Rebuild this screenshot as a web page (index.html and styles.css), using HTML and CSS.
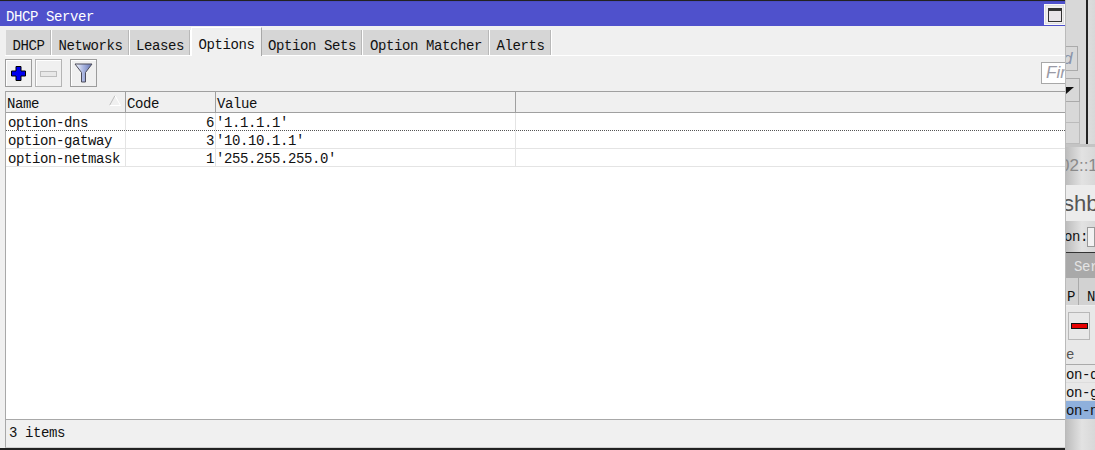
FILE: index.html
```html
<!DOCTYPE html>
<html lang="en">
<head>
<meta charset="utf-8">
<title>DHCP Server</title>
<link rel="stylesheet" href="styles.css">
</head>
<body>
<div class="desktop">
  <aside class="back">
    <div class="back-upper">
      <div class="back-upper-main">
        <div class="back-find"><span>d</span></div>
        <div class="back-drop"><i></i></div>
        <div class="back-cell"></div>
        <div class="back-cell"></div>
      </div>
      <div class="back-upper-edge"></div>
    </div>
    <div class="back-win">
      <div class="back-title"><span>02::1</span></div>
      <div class="back-big"><span>shbo</span></div>
      <div class="back-form"><span>on:</span><i></i></div>
      <div class="back-sub">Ser</div>
      <div class="back-tabs"><span class="bt1">P</span><span class="bt2">N</span></div>
      <div class="back-tool"><div class="back-btn"><i></i></div></div>
      <div class="back-head">e</div>
      <div class="back-row">on-d</div>
      <div class="back-row">on-g</div>
      <div class="back-row sel">on-n</div>
    </div>
  </aside>

  <main class="win">
    <header class="title">
      <span class="title-text">DHCP Server</span>
      <button class="max" aria-label="Maximize"><i></i></button>
    </header>
    <div class="body">
      <nav class="tabs">
        <div class="tab t1">DHCP</div>
        <div class="tab t2">Networks</div>
        <div class="tab t3">Leases</div>
        <div class="tab active t4">Options</div>
        <div class="tab t5">Option Sets</div>
        <div class="tab t6">Option Matcher</div>
        <div class="tab t7">Alerts</div>
      </nav>
      <div class="toolbar">
        <button class="tbtn">
          <svg width="17" height="17" viewBox="0 0 17 17"><path d="M6 1.500h5v4.500h4.500v5H11v4.500H6V11H1.500V6H6z" fill="#0000f0" stroke="#000" stroke-width="1"/></svg>
        </button>
        <button class="tbtn off">
          <svg width="17" height="9" viewBox="0 0 17 9"><rect x="0.500" y="2.500" width="16" height="5" fill="#e8e8e8" stroke="#bdbdbd"/></svg>
        </button>
        <button class="tbtn gapl">
          <svg width="19" height="20" viewBox="0 0 19 20"><defs><linearGradient id="f" x1="0" x2="1" y1="0" y2="0"><stop offset="0" stop-color="#fbfcff"/><stop offset=".5" stop-color="#a8b4e0"/><stop offset="1" stop-color="#6474b4"/></linearGradient></defs><path d="M1 1h17L11.500 9.500V19h-4V9.500z" fill="url(#f)" stroke="#4c4c5a" stroke-width="1"/></svg>
        </button>
        <div class="find">Fir</div>
      </div>
      <div class="table">
        <div class="thead">
          <div class="th c1">Name<svg class="sort" width="12" height="11" viewBox="0 0 12 11"><path d="M6 .5L.5 10.500" fill="none" stroke="#bcbcbc"/><path d="M6 .5l5.500 10H.5" fill="none" stroke="#fff"/></svg></div>
          <div class="th c2">Code</div>
          <div class="th c3">Value</div>
          <div class="th c4"></div>
        </div>
        <div class="row focus">
          <div class="td c1">option-dns</div>
          <div class="td c2 num">6</div>
          <div class="td c3">'1.1.1.1'</div>
          <div class="td c4"></div>
        </div>
        <div class="row">
          <div class="td c1">option-gatway</div>
          <div class="td c2 num">3</div>
          <div class="td c3">'10.10.1.1'</div>
          <div class="td c4"></div>
        </div>
        <div class="row">
          <div class="td c1">option-netmask</div>
          <div class="td c2 num">1</div>
          <div class="td c3">'255.255.255.0'</div>
          <div class="td c4"></div>
        </div>
      </div>
      <footer class="status">3 items</footer>
    </div>
  </main>
</div>
</body>
</html>
```
FILE: styles.css
```css
* { box-sizing: border-box; }
html, body { margin: 0; padding: 0; }
body {
  width: 1095px;
  height: 450px;
  overflow: hidden;
  font-family: "Liberation Mono", monospace;
  font-size: 14px;
  letter-spacing: -0.4px;
  color: #111;
  background: #d8d8d8;
}
.desktop { position: relative; width: 1095px; height: 450px; overflow: hidden; }

/* main window */
.win {
  position: absolute;
  left: 0;
  top: 0;
  width: 1065px;
  height: 450px;
  display: flex;
  flex-direction: column;
  border-top: 1px solid #222;
  border-bottom: 2px solid #222;
  background: #f0f0f0;
}
.title {
  height: 25px;
  flex: none;
  background: #4f51cc;
  border-top: 1px solid #4a4cc4;
  color: #fff;
  display: flex;
  align-items: center;
  justify-content: space-between;
  padding-left: 6px;
  line-height: 1;
}
.title-text { margin-top: 5px; }
.max {
  width: 21px;
  height: 21px;
  margin: 0;
  padding: 3px;
  border: 1px solid #f8f8f8;
  box-shadow: inset 0 0 0 1px #e0e0e0;
  background: #f0eeee;
  display: block;
}
.max i {
  display: block;
  width: 14px;
  height: 14px;
  border: 1px solid #333;
  border-top-width: 3px;
  background: #e8e4e8;
}
.body {
  flex: 1;
  min-height: 0;
  display: flex;
  flex-direction: column;
  padding-left: 5px;
  background: #f0f0f0;
}
.tabs {
  height: 30px;
  flex: none;
  display: flex;
  align-items: flex-end;
  padding-left: 1px;
  border-bottom: 1px solid #fff;
}
.tab {
  height: 25px;
  line-height: 33px;
  text-align: center;
  background: #d6d6d6;
  border-right: 1px solid #fff;
  box-shadow: inset -1px 0 0 #b8b8b8;
}
.tab.active {
  height: 29px;
  line-height: 34px;
  margin-bottom: -1px;
  background: #f0f0f0;
  border-top: 1px solid #fff;
  border-left: 1px solid #fff;
  border-right: 1px solid #a8a8a8;
  box-shadow: none;
}
.t1 { width: 46px; }
.t2 { width: 78px; }
.t3 { width: 61px; }
.t4 { width: 71px; }
.t5 { width: 101px; }
.t6 { width: 127px; }
.t7 { width: 62px; }

.toolbar {
  height: 35px;
  flex: none;
  display: flex;
  align-items: flex-start;
  gap: 3px;
  padding-top: 3px;
}
.tbtn {
  width: 27px;
  height: 28px;
  padding: 0;
  margin: 0;
  border: 1px solid #9c9c9c;
  background: #f0f0f0;
  box-shadow: inset 1px 1px 0 #fff;
  display: flex;
  align-items: center;
  justify-content: center;
}
.tbtn.off { border-color: #b4b4b4; }
.tbtn.gapl { margin-left: 5px; }
.find {
  margin-left: auto;
  margin-top: 3px;
  width: 24px;
  height: 22px;
  background: #fff;
  border: 1px solid #a8a8a8;
  border-right: 0;
  color: #9a9aa6;
  font-family: "Liberation Sans", sans-serif;
  font-style: italic;
  font-size: 17px;
  letter-spacing: 0;
  line-height: 20px;
  padding-left: 4px;
  overflow: hidden;
  white-space: nowrap;
}

.table {
  flex: 1;
  min-height: 0;
  background: #fff;
  border-bottom: 1px solid #a8a8a8;
  border-left: 1px solid #a8a8a8;
}
.thead {
  display: flex;
  height: 22px;
  background: #f0f0f0;
  border-top: 1px solid #a0a0a0;
  border-bottom: 1px solid #a0a0a0;
}
.th {
  position: relative;
  padding-left: 1px;
  line-height: 25px;
  border-right: 1px solid #a0a0a0;
}
.th.c4 { border-right: 0; }
.sort { position: absolute; left: 103px; top: 3px; }
.c1 { width: 120px; flex: none; }
.c2 { width: 90px; flex: none; }
.c3 { width: 300px; flex: none; }
.c4 { flex: 1; }
.row {
  display: flex;
  height: 18px;
  border-bottom: 1px solid #e4e4e4;
}
.row.focus { border-bottom: 1px dotted #555; }
.td {
  padding-left: 2px;
  line-height: 20px;
  height: 17px;
  border-right: 1px solid #e4e4e4;
  white-space: nowrap;
}
.td.num { text-align: right; padding-right: 1px; padding-left: 0; }
.td.c3 { padding-left: 0; }
.td.c4 { border-right: 0; }
.status {
  height: 28px;
  flex: none;
  padding-left: 3px;
  line-height: 26px;
  background: #f0f0f0;
  border-left: 1px solid #a8a8a8;
  border-bottom: 1px solid #d0d0d0;
}

/* window behind */
.back {
  position: absolute;
  left: 1062px;
  top: 0;
  width: 33px;
  height: 450px;
  background: linear-gradient(90deg, #a8a8a8, #bdbdbd 12%, #e2e2e2 60%, #d8d8d8);
  overflow: hidden;
  border-left: 4px solid transparent;
  background-origin: border-box;
  background-clip: border-box;
}
.back-upper { display: flex; height: 147px; border-bottom: 3px solid #c4c4c4; }
.back-upper-main {
  width: 20px;
  flex: none;
  padding-top: 46px;
  display: flex;
  flex-direction: column;
  background: #d8d8d8;
}
.back-find {
  height: 25px;
  width: 12px;
  border: 1px solid #aaa;
  border-left: 0;
  margin-bottom: 7px;
  font: italic 17px/23px "Liberation Sans", sans-serif;
  color: #8a94aa;
  overflow: hidden;
}
.back-find span { display: block; margin-left: -3px; }
.back-drop {
  height: 25px;
  width: 14px;
  border: 1px solid #aaa;
  border-left: 0;
}
.back-drop i {
  display: block;
  margin-top: 8px;
  width: 0;
  height: 0;
  border-top: 7px solid #111;
  border-right: 8px solid transparent;
}
.back-cell { height: 21px; width: 14px; border: 1px solid #bbb; border-top: 0; border-left: 0; }
.back-upper-edge { width: 2px; flex: none; background: #222; }

.back-win { display: flex; flex-direction: column; white-space: nowrap; overflow: hidden; }
.back-title { height: 38px; padding-top: 9px; font: 17px/20px "Liberation Sans", sans-serif; letter-spacing: 0; color: #8a8a8a; }
.back-title span { display: block; margin-left: -6px; }
.back-big { height: 36px; font: 22px/37px "Liberation Sans", sans-serif; letter-spacing: 0; color: #555; background: #ececec; }
.back-big span { display: block; margin-left: -3px; }
.back-form { height: 32px; display: flex; align-items: center; border-bottom: 1px solid #333; }
.back-form span { margin-left: -2px; }
.back-form i { width: 12px; height: 20px; margin-left: -1px; background: #f2f2f2; border: 1px solid #999; }
.back-sub { height: 25px; line-height: 28px; background: #a9a9a9; color: #e4e4e4; padding-left: 8px; }
.back-tabs { height: 28px; display: flex; line-height: 38px; background: #d2d2d2; border-bottom: 1px solid #eee; }
.bt1 { width: 16px; padding-left: 1px; border-right: 1px solid #aaa; }
.bt2 { padding-left: 8px; }
.back-tool { height: 37px; padding: 6px 0 0 2px; background: #e8e8e8; }
.back-btn { width: 22px; height: 28px; border: 1px solid #b8b8b8; display: flex; align-items: center; justify-content: center; }
.back-btn i { width: 17px; height: 6px; flex: none; background: #e60000; border: 1px solid #111; }
.back-head { height: 22px; line-height: 24px; background: #e8e8e8; border-bottom: 1px solid #aaa; color: #555; }
.back-row { height: 18px; line-height: 20px; background: #e8e8e8; border-bottom: 1px solid #ddd; }
.back-row.sel { background: #8fb0dc; border-bottom: 0; }
```
